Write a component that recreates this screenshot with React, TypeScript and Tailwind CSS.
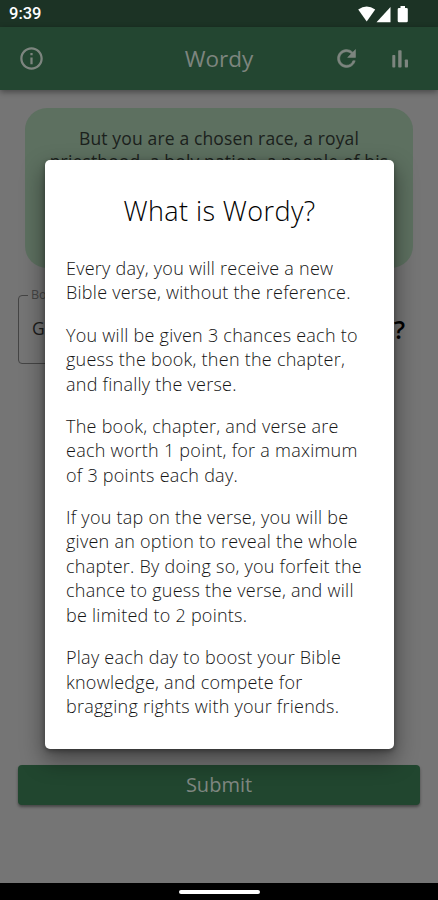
import { MdInfoOutline } from "react-icons/md";

const paragraphs: string[][] = [
  ["Every day, you will receive a new", "Bible verse, without the reference."],
  ["You will be given 3 chances each to", "guess the book, then the chapter,", "and finally the verse."],
  ["The book, chapter, and verse are", "each worth 1 point, for a maximum", "of 3 points each day."],
  [
    "If you tap on the verse, you will be",
    "given an option to reveal the whole",
    "chapter. By doing so, you forfeit the",
    "chance to guess the verse, and will",
    "be limited to 2 points.",
  ],
  ["Play each day to boost your Bible", "knowledge, and compete for", "bragging rights with your friends."],
];

function StatusBar() {
  return (
    <div className="flex h-[27px] shrink-0 items-center justify-between bg-[#1c3325] pl-[9px] pr-[29px] text-white">
      <span className="mt-[2px] font-['Roboto',sans-serif] text-[16.5px] font-medium leading-none">9:39</span>
      <svg width="53" height="18" viewBox="0 0 53 18" fill="currentColor" className="-mr-[1px]">
        <path d="M1.200 4.600Q9.7-1.8 18.2 4.600L9.7 16.5Z" />
        <path d="M19.5 17.200L33.5 2V17.200Z" />
        <path d="M43.500 1h4.500v2h1.500q1.300 0 1.300 1.300v11.700q0 1.300-1.300 1.300h-7.500q-1.300 0-1.300-1.300V4.300q0-1.300 1.300-1.300H43.500Z" />
      </svg>
    </div>
  );
}

function RefreshIcon() {
  return (
    <svg width="27" height="27" viewBox="0 0 24 24" fill="currentColor" stroke="currentColor" strokeWidth="0.5" strokeLinejoin="round">
      <path d="M17.65 6.35A7.95 7.95 0 0 0 12 4c-4.42 0-7.99 3.58-7.99 8s3.57 8 7.99 8c3.73 0 6.84-2.55 7.730-6h-2.080A5.990 5.990 0 0 1 12 18c-3.310 0-6-2.690-6-6s2.690-6 6-6c1.660 0 3.140.69 4.220 1.780L13 11h7V4l-2.350 2.350z" />
    </svg>
  );
}

function BarsIcon() {
  return (
    <svg width="28" height="28" viewBox="0 0 28 28" fill="currentColor">
      <rect x="6.3" y="10" width="3" height="12.6" rx="0.8" />
      <rect x="12.2" y="5.300" width="3.400" height="17.300" rx="0.8" />
      <rect x="18.800" y="14.500" width="3.200" height="8.100" rx="0.8" />
    </svg>
  );
}

function AppBar() {
  return (
    <header className="relative z-10 grid h-[63px] shrink-0 grid-cols-3 items-center bg-[#234631] text-[#7d857f] shadow-[0_2px_6px_rgba(0,0,0,0.4)]">
      <MdInfoOutline size={27} className="ml-[18px]" />
      <h1 className="pt-px text-center text-[22.5px] leading-none">Wordy</h1>
      <div className="flex items-center justify-end gap-[26px] pr-[24px]">
        <RefreshIcon />
        <BarsIcon />
      </div>
    </header>
  );
}

function Modal() {
  return (
    <div className="absolute left-[45px] top-[160px] z-20 h-[589px] w-[349px] rounded-[5px] bg-white px-[21px] text-[#151515] shadow-[0_10px_22px_2px_rgba(0,0,0,0.4),0_2px_5px_rgba(0,0,0,0.35)]">
      <h2 className="pt-[33px] text-center text-[27px] font-light leading-[36px] tracking-[0.4px] text-black">What is Wordy?</h2>
      <div className="mt-[27px] flex flex-col gap-[17.8px] text-[18px] font-light leading-[24.46px] tracking-[0.25px]">
        {paragraphs.map((lines) => (
          <p key={lines[0]}>
            {lines.map((line) => (
              <span key={line} className="block whitespace-nowrap">{line}</span>
            ))}
          </p>
        ))}
      </div>
    </div>
  );
}

export default function App() {
  return (
    <div className="relative flex h-[900px] w-[438px] flex-col overflow-hidden bg-[#757575] font-['Open_Sans',sans-serif]">
      <StatusBar />
      <AppBar />
      <main className="flex flex-1 flex-col px-[18px] pt-[18px]">
        <section className="mx-[7px] h-[160px] shrink-0 rounded-[22px] bg-[#5d7060] pt-[19px] text-center text-[17.5px] leading-[23.4px] tracking-[0.15px] text-[#1b211c]">
          <p>But you are a chosen race, a royal</p>
          <p className="whitespace-nowrap">priesthood, a holy nation, a people of his</p>
        </section>
        <div className="mt-[20px] flex h-[76px] shrink-0 items-center justify-between">
          <fieldset className="h-[76px] w-[340px] rounded-[4px] border border-[#454545] pl-[9px]">
            <legend className="ml-0 px-[3px] text-[12.5px] leading-[14px] text-[#454545]">Book</legend>
            <div className="pl-[4px] pt-[13px] text-[17.5px] leading-[26px] text-[#1c1c1c]">Genesis</div>
          </fieldset>
          <span className="pr-[15px] pt-[7px] text-[25px] font-semibold leading-none text-black">?</span>
        </div>
        <button className="mt-auto mb-[78px] h-[40px] shrink-0 rounded-[4px] bg-[#21462f] text-[20px] font-medium text-[#7f8781] shadow-[0_2px_3px_rgba(0,0,0,0.4)]">
          Submit
        </button>
      </main>
      <div className="flex h-[17px] shrink-0 justify-center bg-black pt-[7px]">
        <div className="h-[4px] w-[81px] rounded-full bg-white" />
      </div>
      <Modal />
    </div>
  );
}
